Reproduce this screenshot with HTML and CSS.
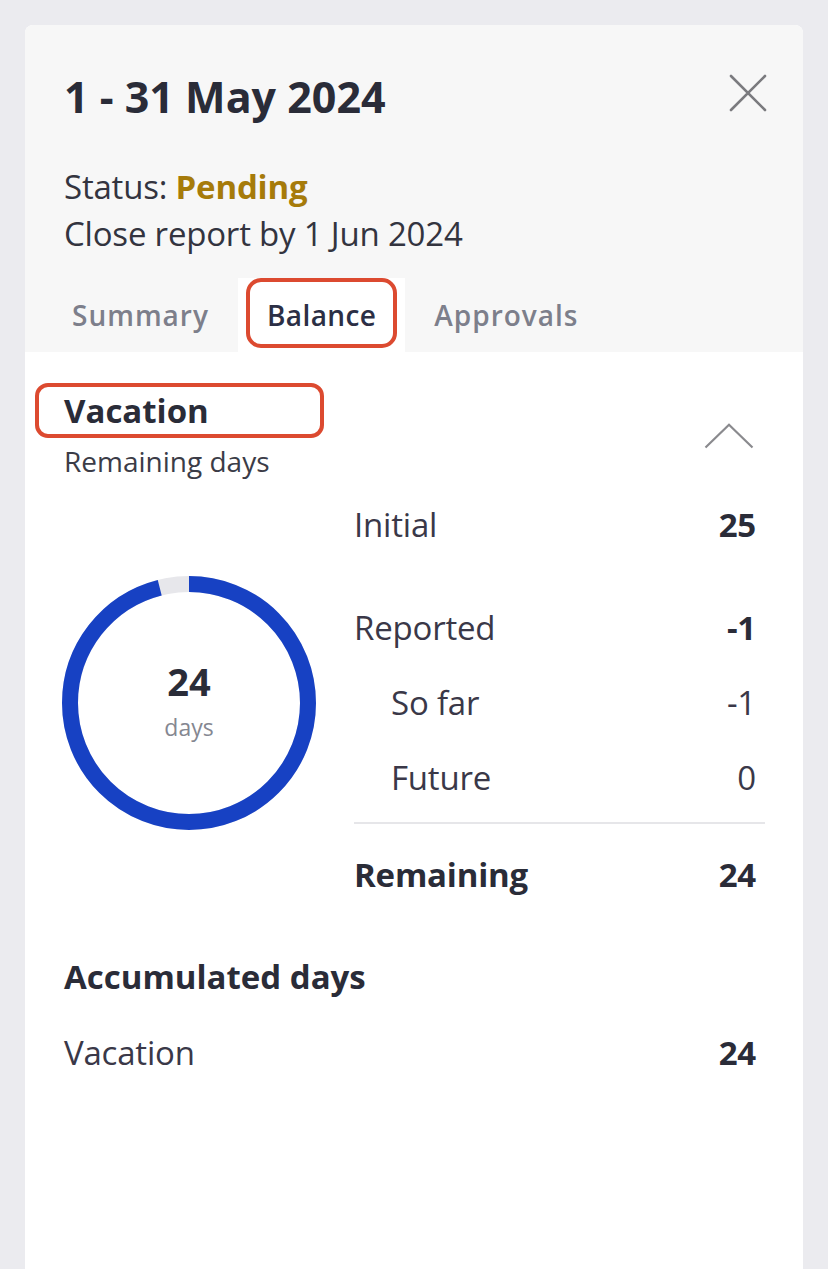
FILE: index.html
```html
<!DOCTYPE html>
<html lang="en">
<head>
<meta charset="utf-8">
<title>Balance</title>
<link rel="stylesheet" href="styles.css">
</head>
<body>
<div class="panel">
  <header class="panel-head">
    <div class="title-row">
      <h1 class="title">1 - 31 May 2024</h1>
      <button class="close" aria-label="Close">
        <svg width="38" height="38" viewBox="0 0 38 38"><path d="M2 2 L36 36 M36 2 L2 36" stroke="#7b7b7f" stroke-width="2.6" fill="none" stroke-linecap="round"/></svg>
      </button>
    </div>
    <div class="meta">
      <p>Status: <span class="pending">Pending</span></p>
      <p>Close report by 1 Jun 2024</p>
    </div>
    <nav class="tabs">
      <span class="tab">Summary</span>
      <span class="tab active">Balance<span class="mark mark-tab"></span></span>
      <span class="tab">Approvals</span>
    </nav>
  </header>

  <main class="content">
    <div class="section-head">
      <div>
        <h2 class="section-title">Vacation<span class="mark mark-title"></span></h2>
        <p class="section-sub">Remaining days</p>
      </div>
      <svg class="chevron" width="50" height="26" viewBox="0 0 50 26"><path d="M1.5 24.5 L25 1.8 L48.5 24.5" stroke="#8a8a8e" stroke-width="2.2" fill="none"/></svg>
    </div>

    <div class="balance">
      <div class="donut">
        <svg width="256" height="256" viewBox="0 0 256 256">
          <circle cx="128" cy="128" r="119" fill="none" stroke="#e7e7eb" stroke-width="16"/>
          <circle cx="128" cy="128" r="119" fill="none" stroke="#1741c3" stroke-width="16" stroke-dasharray="717.8 29.9" transform="rotate(-90 128 128)"/>
        </svg>
        <div class="donut-label">
          <span class="donut-num">24</span>
          <span class="donut-unit">days</span>
        </div>
      </div>
      <div class="table">
        <div class="row"><span>Initial</span><b>25</b></div>
        <div class="row spaced"><span>Reported</span><b>-1</b></div>
        <div class="row sub"><span>So far</span><span>-1</span></div>
        <div class="row sub"><span>Future</span><span>0</span></div>
        <div class="divider"></div>
        <div class="row total"><b>Remaining</b><b>24</b></div>
      </div>
    </div>

    <h3 class="acc-title">Accumulated days</h3>
    <div class="acc-row"><span>Vacation</span><b>24</b></div>
  </main>
</div>
</body>
</html>
```

FILE: styles.css
```css
* { box-sizing: border-box; }
html, body { margin: 0; padding: 0; }
body {
  background: #ebebef;
  font-family: "Open Sans", "Noto Sans", sans-serif;
  color: #2b2d3a;
  height: 1269px;
  overflow: hidden;
}
p, h1, h2, h3 { margin: 0; }

.panel {
  margin: 25px 0 0 25px;
  width: 778px;
  min-height: 1244px;
  background: #ffffff;
  border-radius: 8px 8px 0 0;
  overflow: hidden;
}

.panel-head {
  background: #f7f7f7;
  padding-top: 47px;
}
.title-row {
  display: flex;
  justify-content: space-between;
  align-items: center;
  padding: 0 36px 0 39px;
}
.title {
  font-size: 43px;
  line-height: 50px;
  font-weight: 700;
  color: #2a2c38;
  letter-spacing: 0;
}
.close {
  border: 0;
  background: none;
  padding: 0;
  width: 38px;
  height: 38px;
  margin-bottom: 8px;
  display: block;
}
.close svg { display: block; }

.meta {
  margin-top: 41px;
  padding-left: 39px;
  font-size: 33px;
  line-height: 47px;
  color: #33343f;
  letter-spacing: -0.2px;
}
.pending {
  color: #a67b0a;
  font-weight: 700;
}

.tabs {
  display: flex;
  margin-top: 21px;
  padding-left: 18px;
}
.tab {
  position: relative;
  height: 74px;
  line-height: 74px;
  padding: 0 29px;
  font-size: 28px;
  font-weight: 600;
  color: #7d7f8b;
  letter-spacing: 1px;
}
.tab.active {
  background: #ffffff;
  color: #2c2f45;
  letter-spacing: 0.4px;
}

.mark {
  position: absolute;
  border: 4px solid #dc4a30;
  pointer-events: none;
}
.mark-tab {
  left: 8px;
  top: 0;
  width: 151px;
  height: 70px;
  border-radius: 15px;
}
.mark-title {
  left: -29px;
  top: -8px;
  width: 289px;
  height: 55px;
  border-radius: 13px;
}

.content {
  padding: 39px 38px 0 39px;
}
.section-head {
  display: flex;
  justify-content: space-between;
  align-items: center;
}
.section-title {
  position: relative;
  font-size: 33px;
  line-height: 40px;
  font-weight: 700;
  color: #2a2c38;
}
.section-sub {
  font-size: 28px;
  line-height: 34px;
  color: #3b3c47;
  margin-top: 13px;
  letter-spacing: 0;
}
.chevron {
  display: block;
  margin-right: 11px;
  margin-top: 3px;
}

.balance {
  display: grid;
  grid-template-columns: 290px 1fr;
  align-items: center;
  margin-top: 9px;
}
.donut {
  display: grid;
  width: 256px;
  height: 256px;
  margin-left: -3px;
  margin-top: 6px;
}
.donut svg, .donut-label {
  grid-area: 1 / 1;
}
.donut svg { display: block; }
.donut-label {
  display: flex;
  flex-direction: column;
  align-items: center;
  justify-content: center;
  padding-bottom: 6px;
}
.donut-num {
  font-size: 38px;
  line-height: 46px;
  font-weight: 700;
  color: #2a2c38;
}
.donut-unit {
  font-size: 23px;
  line-height: 30px;
  color: #858791;
  margin-top: 8px;
}

.table {
  font-size: 33px;
  color: #3a3848;
}
.row {
  display: flex;
  justify-content: space-between;
  align-items: center;
  height: 75px;
  padding-right: 9px;
  letter-spacing: -0.2px;
}
.row b { font-weight: 700; color: #2a2c38; }
.row.spaced { margin-top: 28px; }
.row.sub { padding-left: 37px; }
.divider {
  margin-top: 7px;
  border-top: 2px solid #e6e6e9;
}
.row.total { margin-top: 13px; }

.acc-title {
  margin-top: 43px;
  font-size: 33px;
  line-height: 44px;
  font-weight: 700;
  color: #2a2c38;
  letter-spacing: 0;
}
.acc-row {
  display: flex;
  justify-content: space-between;
  align-items: center;
  height: 44px;
  margin-top: 31px;
  padding-right: 9px;
  font-size: 33px;
  color: #3a3848;
  letter-spacing: -0.2px;
}
.acc-row b { color: #2a2c38; }
```
